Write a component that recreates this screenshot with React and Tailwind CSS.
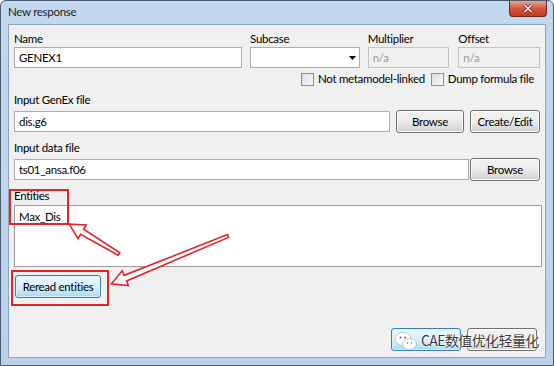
const font = { fontFamily: 'Lato, "Liberation Sans", sans-serif' }

function TextBox({ value, className = '', disabled = false }) {
  return (
    <div
      className={`h-[21px] border flex items-center px-[4px] text-[11.5px] ${
        disabled ? 'bg-[#f0f0f0] border-[#c4c4c4] text-[#9a9a9a]' : 'bg-white border-[#abadb3] text-black'
      } ${className}`}
    >
      {value}
    </div>
  )
}

function Button({ children, className = '', focused = false }) {
  return (
    <div
      className={`h-[23px] rounded-[3px] border flex items-center justify-center whitespace-nowrap text-[11.5px] text-black ${
        focused
          ? 'border-[#3c7fb1] bg-gradient-to-b from-[#eaf6fd] via-[#d9f0fc] to-[#a7d9f5] shadow-[inset_0_0_0_1px_#d8effa]'
          : 'border-[#707070] bg-gradient-to-b from-[#f2f2f2] via-[#ebebeb] to-[#cfcfcf] shadow-[inset_0_0_0_1px_#fbfbfb]'
      } ${className}`}
    >
      {children}
    </div>
  )
}

function Checkbox({ label }) {
  return (
    <div className="flex items-center gap-[4px] text-[11.5px] text-black">
      <div className="w-[13px] h-[13px] border border-[#8e8f8f] bg-gradient-to-br from-[#dcdcdc] to-[#fbfbfb]" />
      <span>{label}</span>
    </div>
  )
}

function Arrow({ x, y, length, angle }) {
  const L = length
  const pts = `0,-1.5 ${L - 15},-3 ${L - 15},-8 ${L},0 ${L - 15},8 ${L - 15},3 0,1.5`
  return (
    <polygon
      points={pts}
      transform={`translate(${x} ${y}) rotate(${angle})`}
      fill="white"
      stroke="#e0262b"
      strokeWidth="1.6"
      strokeLinejoin="miter"
    />
  )
}

export default function App() {
  return (
    <div
      className="relative w-[554px] h-[366px] bg-gradient-to-b from-[#c2d8ef] to-[#b9d1ea] border border-[#4a5b70] rounded-t-[6px] flex flex-col overflow-hidden tracking-[-0.3px]"
      style={font}
    >
      {/* Title bar */}
      <div className="h-[23px] flex items-center justify-between pl-[7px] pr-[6px]">
        <span className="text-[11.5px] text-[#1e1e1e] mt-[-1px]">New response</span>
        <div className="self-start w-[38px] h-[16px] rounded-b-[4px] border border-t-0 border-[#6d2a22] bg-gradient-to-b from-[#e8a493] via-[#d2553d] to-[#c23a22] flex items-center justify-center">
          <svg width="10" height="9" viewBox="0 0 10 9">
            <path d="M1.5 1 L8.5 8 M8.5 1 L1.5 8" stroke="#5b1a10" strokeWidth="3" />
            <path d="M1.5 1 L8.5 8 M8.5 1 L1.5 8" stroke="white" strokeWidth="1.6" />
          </svg>
        </div>
      </div>

      {/* Client area */}
      <div className="mx-[7px] h-[334px] bg-[#f0f0f0] border border-[#8ea3bd] pl-[5px] pr-[5px] pt-[5px] flex flex-col">
        <div className="flex gap-[8px]">
          <div className="w-[229px] flex flex-col">
            <span className="text-[11.5px] h-[17px] leading-[17px]">Name</span>
            <TextBox value="GENEX1" />
          </div>
          <div className="w-[110px] flex flex-col">
            <span className="text-[11.5px] h-[17px] leading-[17px]">Subcase</span>
            <div className="h-[21px] border border-[#abadb3] bg-white flex items-center justify-end pr-[3px]">
              <svg width="7" height="4" viewBox="0 0 7 4">
                <path d="M0 0 L7 0 L3.5 4 Z" fill="black" />
              </svg>
            </div>
          </div>
          <div className="w-[82px] flex flex-col">
            <span className="text-[11.5px] h-[17px] leading-[17px]">Multiplier</span>
            <TextBox value="n/a" disabled />
          </div>
          <div className="w-[82px] ml-[1px] flex flex-col">
            <span className="text-[11.5px] h-[17px] leading-[17px]">Offset</span>
            <TextBox value="n/a" disabled />
          </div>
        </div>

        <div className="flex justify-end gap-[6px] mt-[3px] pr-[6px] h-[16px]">
          <Checkbox label="Not metamodel-linked" />
          <Checkbox label="Dump formula file" />
        </div>

        <span className="text-[11.5px] h-[17px] leading-[17px] mt-[4px]">Input GenEx file</span>
        <div className="flex items-center gap-[6px] mt-[2px]">
          <TextBox value="dis.g6" className="w-[376px]" />
          <Button className="w-[68px]">Browse</Button>
          <Button className="w-[70px]">Create/Edit</Button>
        </div>

        <span className="text-[11.5px] h-[17px] leading-[17px] mt-[6px]">Input data file</span>
        <div className="flex items-center gap-[1px] mt-[2px]">
          <TextBox value="ts01_ansa.f06" className="w-[456px]" />
          <Button className="w-[70px]">Browse</Button>
        </div>

        <span className="text-[11.5px] h-[17px] leading-[17px] mt-[6px]">Entities</span>
        <div className="w-[528px] h-[62px] border border-[#9a9a9a] bg-white mt-[1px] px-[4px] pt-[2px] text-[11.5px]">
          Max_Dis
        </div>

        <Button focused className="w-[86px] mt-[8px] ml-[1px]">Reread entities</Button>

        <div className="flex gap-[6px] justify-end mt-[30px] pr-[3px]">
          <Button focused className="w-[70px]" />
          <Button className="w-[70px]" />
        </div>
      </div>

      {/* Annotations */}
      <div className="absolute left-[8px] top-[188px] w-[60px] h-[36px] border-2 border-[#e0262b]" />
      <div className="absolute left-[10px] top-[269px] w-[98px] h-[36px] border-2 border-[#e0262b]" />
      <svg className="absolute left-0 top-0" width="554" height="366">
        <Arrow x={118} y={253} length={58} angle={211} />
        <Arrow x={227} y={235} length={126} angle={157.7} />
      </svg>

      {/* Watermark */}
      <div className="absolute left-[393px] top-[329px] flex items-center gap-[3px]">
        <svg width="24" height="20" viewBox="0 0 24 20">
          <ellipse cx="9" cy="8" rx="8" ry="6.5" fill="white" stroke="#9aa" strokeWidth="0.6" />
          <ellipse cx="15.5" cy="13" rx="7" ry="5.5" fill="white" stroke="#9aa" strokeWidth="0.6" />
          <circle cx="6.5" cy="6.5" r="1" fill="#666" />
          <circle cx="11" cy="6.5" r="1" fill="#666" />
          <circle cx="13.5" cy="12" r="0.8" fill="#666" />
          <circle cx="17.5" cy="12" r="0.8" fill="#666" />
        </svg>
        <span
          className="text-[14px] text-[#3a3a3a] [text-shadow:0_0_2px_#fff,0_0_2px_#fff] tracking-[-0.6px]"
          style={{ fontFamily: '"Noto Sans CJK SC", "Noto Sans", sans-serif' }}
        >
          CAE数值优化轻量化
        </span>
      </div>
    </div>
  )
}
